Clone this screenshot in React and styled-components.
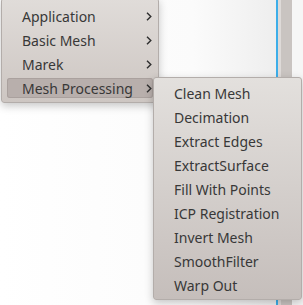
import React from 'react';
import styled, { createGlobalStyle } from 'styled-components';

const GlobalStyle = createGlobalStyle`
    body {
        margin: 0;
        overflow: hidden;
        font-family: "Noto Sans", "DejaVu Sans", sans-serif;
    }
`;

const Desktop = styled.div`
    position: relative;
    width: 303px;
    height: 305px;
    display: flex;
    overflow: hidden;
    background: #fafafa;
`;

const Canvas = styled.div`
    flex: 1;
    background: linear-gradient(to right, #ffffff 0%, #fbfbfb 70%, #eeeeee 100%);
`;

const Strip = styled.div`
    width: ${p => p.w}px;
    background: ${p => p.color};
`;

const Menu = styled.div`
    position: absolute;
    left: ${p => p.x}px;
    top: ${p => p.y}px;
    width: ${p => p.w}px;
    box-sizing: border-box;
    display: flex;
    flex-direction: column;
    padding: ${p => p.pt}px 0 2px;
    border: 1px solid #b3adaa;
    border-radius: 3px;
    background: linear-gradient(to bottom, ${p => p.top}, ${p => p.bottom});
    box-shadow: 0 3px 8px rgba(0, 0, 0, 0.22);
`;

const Item = styled.div`
    position: relative;
    display: flex;
    align-items: center;
    height: 20px;
    margin: 2px 5px;
    padding-left: 15px;
    border-radius: 3px;
    font-size: 14px;
    color: #383838;
    white-space: nowrap;
    background: ${p => (p.active ? '#b8afac' : 'transparent')};
    box-shadow: ${p => (p.active ? 'inset 0 0 0 1px #aaa19e' : 'none')};
`;

const Arrow = styled.svg`
    position: absolute;
    right: 1px;
    top: 6px;
`;

const Chevron = () => (
    <Arrow width="6" height="9" viewBox="0 0 6 9">
        <path d="M1 0.8 L4.8 4.5 L1 8.2" fill="none" stroke="#2e2e2e" strokeWidth="1.4" />
    </Arrow>
);

const mainItems = ['Application', 'Basic Mesh', 'Marek', 'Mesh Processing'];
const subItems = [
    'Clean Mesh',
    'Decimation',
    'Extract Edges',
    'ExtractSurface',
    'Fill With Points',
    'ICP Registration',
    'Invert Mesh',
    'SmoothFilter',
    'Warp Out',
];

const App = () => {
    return (
        <Desktop>
            <GlobalStyle />
            <Canvas />
            <Strip w={2} color="#3daee9" />
            <Strip w={3} color="#dedad8" />
            <Strip w={11} color="#c9c4c1" />
            <Strip w={11} color="#f6f6f6" />

            <Menu x={1} y={-2} w={158} pt={5} top="#e0dcd9" bottom="#cdc6c2">
                {mainItems.map(name => (
                    <Item key={name} active={name === 'Mesh Processing'}>
                        {name}
                        <Chevron />
                    </Item>
                ))}
            </Menu>

            <Menu x={153} y={77} w={149} pt={3} top="#e3e0dd" bottom="#c5bebb">
                {subItems.map(name => (
                    <Item key={name}>{name}</Item>
                ))}
            </Menu>
        </Desktop>
    );
};

export default App;
